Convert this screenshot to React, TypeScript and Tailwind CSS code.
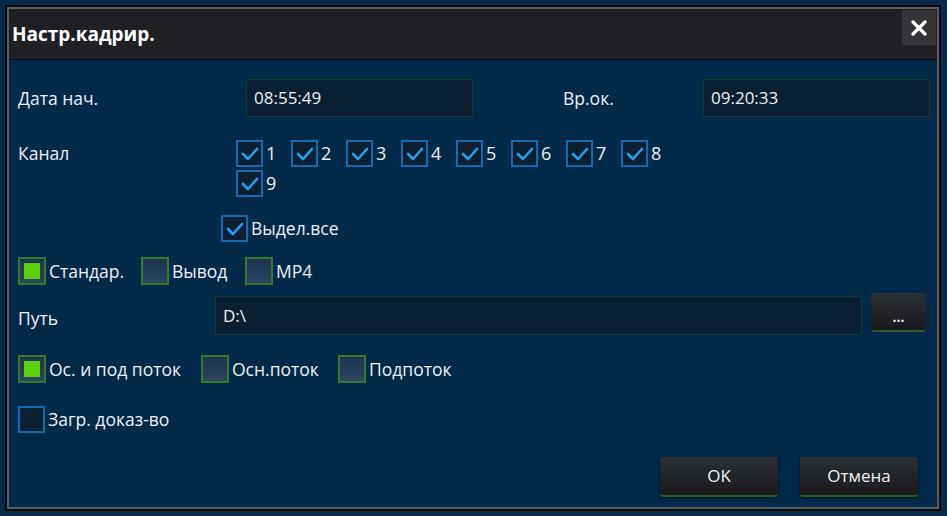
const font = { fontFamily: '"Open Sans", "Noto Sans", "Liberation Sans", sans-serif' }

function Check() {
  return (
    <svg width="18" height="14" viewBox="0 0 18 14" fill="none">
      <polyline points="2,7 7,12 16,2" stroke="#1ea2f2" strokeWidth="2.6" strokeLinecap="round" strokeLinejoin="round" />
    </svg>
  )
}

function BlueBox({ checked = true }: { checked?: boolean }) {
  return (
    <div className="w-[27px] h-[27px] border-2 border-[#0f6cb0] bg-[#0b1f33] flex items-center justify-center shrink-0">
      {checked && <Check />}
    </div>
  )
}

function GreenBox({ checked = false }: { checked?: boolean }) {
  return (
    <div className="w-[28px] h-[28px] border-2 border-[#2f7d25] bg-gradient-to-b from-[#1c3450] to-[#2c4662] flex items-center justify-center shrink-0">
      {checked && <div className="w-[16px] h-[16px] bg-[#5bcf08]" />}
    </div>
  )
}

function Channel({ n }: { n: number }) {
  return (
    <div className="w-[55px] flex items-center gap-[3px]">
      <BlueBox />
      <span className="text-[18px] text-[#eef0f2]">{n}</span>
    </div>
  )
}

function Option({ label, checked, width }: { label: string; checked?: boolean; width: string }) {
  return (
    <div className={`flex items-center gap-[3px] ${width}`}>
      <GreenBox checked={checked} />
      <span className="text-[17.5px] text-[#eef0f2]">{label}</span>
    </div>
  )
}

function Field({ value, className }: { value: string; className: string }) {
  return (
    <div className={`bg-[#0a1f30] border border-[#163b30] flex items-center px-[7px] text-[17px] text-[#eef0f2] ${className}`}>
      {value}
    </div>
  )
}

function Btn({ label }: { label: string }) {
  return (
    <div className="w-[118px] h-[40px] rounded-[3px] bg-gradient-to-b from-[#2c2f33] to-[#181a1c] border-b-2 border-[#2a5d24] flex items-center justify-center text-[17px] text-[#eef0f2] shadow-[0_1px_3px_rgba(0,0,0,0.6)]">
      {label}
    </div>
  )
}

export default function App() {
  return (
    <div className="w-[947px] h-[516px] bg-[#07294a] p-[5px] pb-[5px] pr-[6px]" style={font}>
      <div className="w-full h-full border-2 border-[#0b0b0b]">
        <div className="w-full h-full border-2 border-[#5a5b5d] flex flex-col">
          <div className="h-[50px] bg-[#1e2023] flex items-start justify-between shrink-0">
            <span className="text-[19px] font-bold text-white ml-[3px] mt-[11px]">Настр.кадрир.</span>
            <div className="w-[34px] h-[35px] mt-[1px] mr-[1px] bg-[#333538] flex items-center justify-center">
              <svg width="16" height="16" viewBox="0 0 16 16">
                <path d="M2 2 L14 14 M14 2 L2 14" stroke="#ffffff" strokeWidth="3.2" strokeLinecap="round" />
              </svg>
            </div>
          </div>
          <div className="flex-1 bg-[#01294a] border-t border-[#0d0d0d] pl-[9px] flex flex-col">
            <div className="flex items-center mt-[19px] h-[38px]">
              <span className="w-[228px] text-[17.5px] text-[#eef0f2]">Дата нач.</span>
              <Field value="08:55:49" className="w-[227px] h-[38px]" />
              <span className="ml-[90px] w-[140px] text-[17.5px] text-[#eef0f2]">Вр.ок.</span>
              <Field value="09:20:33" className="w-[227px] h-[38px]" />
            </div>
            <div className="flex mt-[23px]">
              <span className="w-[218px] text-[17.5px] text-[#eef0f2] mt-[0px]">Канал</span>
              <div className="flex flex-col gap-[3px]">
                <div className="flex">
                  {[1, 2, 3, 4, 5, 6, 7, 8].map(n => (
                    <Channel key={n} n={n} />
                  ))}
                </div>
                <div className="flex">
                  <Channel n={9} />
                </div>
              </div>
            </div>
            <div className="flex items-center gap-[3px] ml-[203px] mt-[18px]">
              <BlueBox />
              <span className="text-[17.5px] text-[#eef0f2]">Выдел.все</span>
            </div>
            <div className="flex items-center mt-[15px]">
              <Option label="Стандар." checked width="w-[123px]" />
              <Option label="Вывод" width="w-[104px]" />
              <Option label="MP4" width="w-[80px]" />
            </div>
            <div className="flex items-start mt-[8px] h-[40px]">
              <span className="w-[197px] text-[17.5px] text-[#eef0f2] mt-[12px]">Путь</span>
              <Field value="D:\" className="w-[647px] h-[39px] mt-[3px]" />
              <div className="ml-[9px] w-[55px] h-[39px] rounded-[3px] bg-gradient-to-b from-[#2c2f33] to-[#181a1c] border-b-2 border-[#2a5d24] flex items-end justify-center pb-[6px] text-[14px] font-bold text-[#eef0f2] leading-none">
                ...
              </div>
            </div>
            <div className="flex items-center mt-[22px]">
              <Option label="Ос. и под поток" checked width="w-[183px]" />
              <Option label="Осн.поток" width="w-[137px]" />
              <Option label="Подпоток" width="w-[130px]" />
            </div>
            <div className="flex items-center gap-[3px] mt-[23px]">
              <BlueBox checked={false} />
              <span className="text-[17.5px] text-[#eef0f2]">Загр. доказ-во</span>
            </div>
            <div className="flex justify-end gap-[22px] mt-[24px] mr-[19px]">
              <Btn label="OK" />
              <Btn label="Отмена" />
            </div>
          </div>
        </div>
      </div>
    </div>
  )
}
